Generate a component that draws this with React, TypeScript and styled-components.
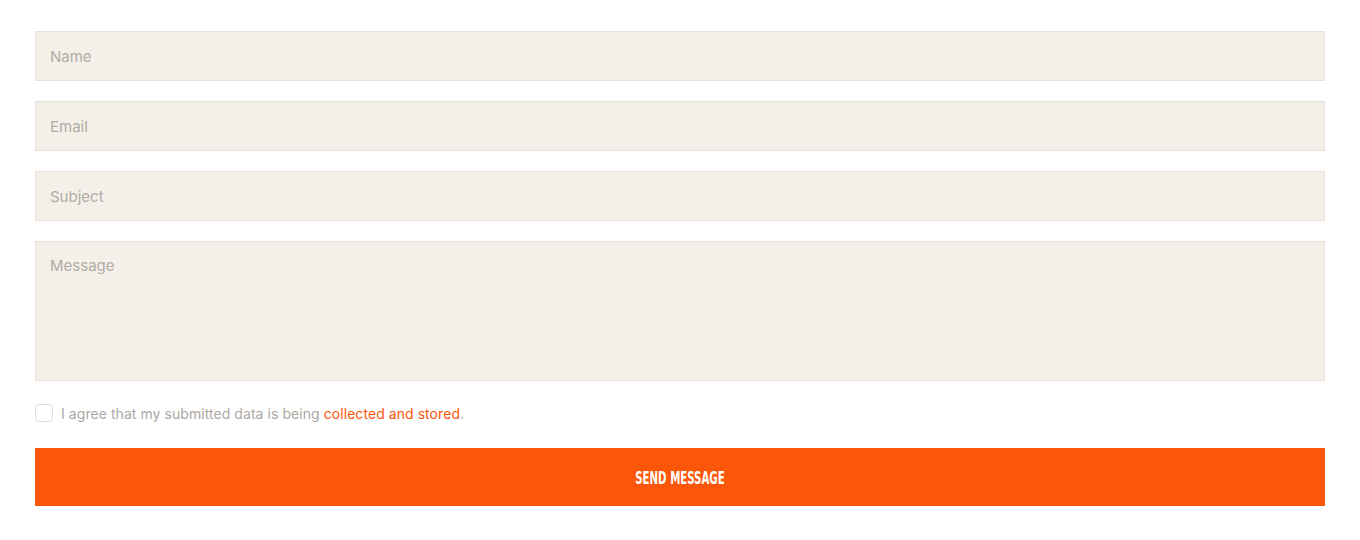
import React from "react";
import styled, { createGlobalStyle } from "styled-components";

const Global = createGlobalStyle`
  html, body { margin: 0; padding: 0; background: #ffffff; }
  body { font-family: Inter, "Noto Sans", sans-serif; }
  * { box-sizing: border-box; }
`;

const Form = styled.form`
  display: flex;
  flex-direction: column;
  gap: 20px;
  padding: 31px 35px;
`;

const Field = styled.input`
  display: block;
  width: 100%;
  height: 50px;
  padding: 0 14px;
  background: #f4f0e9;
  border: 1px solid #e7e0d4;
  border-radius: 0;
  font-family: Inter, "Noto Sans", sans-serif;
  font-size: 15px;
  color: #333;
  outline: none;
  &::placeholder { color: #b0aca5; }
`;

const Area = styled.textarea`
  display: block;
  width: 100%;
  height: 140px;
  padding: 14px 14px;
  background: #f4f0e9;
  border: 1px solid #e7e0d4;
  border-radius: 0;
  font-family: Inter, "Noto Sans", sans-serif;
  font-size: 15px;
  line-height: 20px;
  resize: none;
  outline: none;
  &::placeholder { color: #b0aca5; }
`;

const AgreeRow = styled.label`
  display: flex;
  align-items: center;
  gap: 8px;
  margin-top: 3px;
  font-family: Inter, "Noto Sans", sans-serif;
  font-size: 14px;
  letter-spacing: 0.06px;
  color: #aca8a1;
`;

const Box = styled.span`
  width: 18px;
  height: 18px;
  border: 1px solid #e4ddd1;
  border-radius: 4px;
  background: #fff;
  flex: none;
`;

const Link = styled.a`
  color: #fb560a;
  text-decoration: none;
`;

const Button = styled.button`
  display: flex;
  align-items: center;
  justify-content: center;
  height: 58px;
  margin-top: 6px;
  border: none;
  background: #fb560a;
  color: #fff;
  cursor: pointer;
`;

const ButtonLabel = styled.span`
  display: inline-block;
  font-family: "DejaVu Sans Condensed", "Liberation Sans Narrow", sans-serif;
  font-weight: 700;
  font-size: 18px;
  line-height: 1;
  text-transform: uppercase;
  transform: scaleX(0.63);
  margin-top: 1px;
`;

export default function App() {
  return (
    <>
      <Global />
      <Form onSubmit={(e) => e.preventDefault()}>
        <Field placeholder="Name" />
        <Field placeholder="Email" />
        <Field placeholder="Subject" />
        <Area placeholder="Message" />
        <AgreeRow>
          <Box />
          <span>
            I agree that my submitted data is being <Link href="#">collected and stored</Link>.
          </span>
        </AgreeRow>
        <Button type="submit">
          <ButtonLabel>Send Message</ButtonLabel>
        </Button>
      </Form>
    </>
  );
}
